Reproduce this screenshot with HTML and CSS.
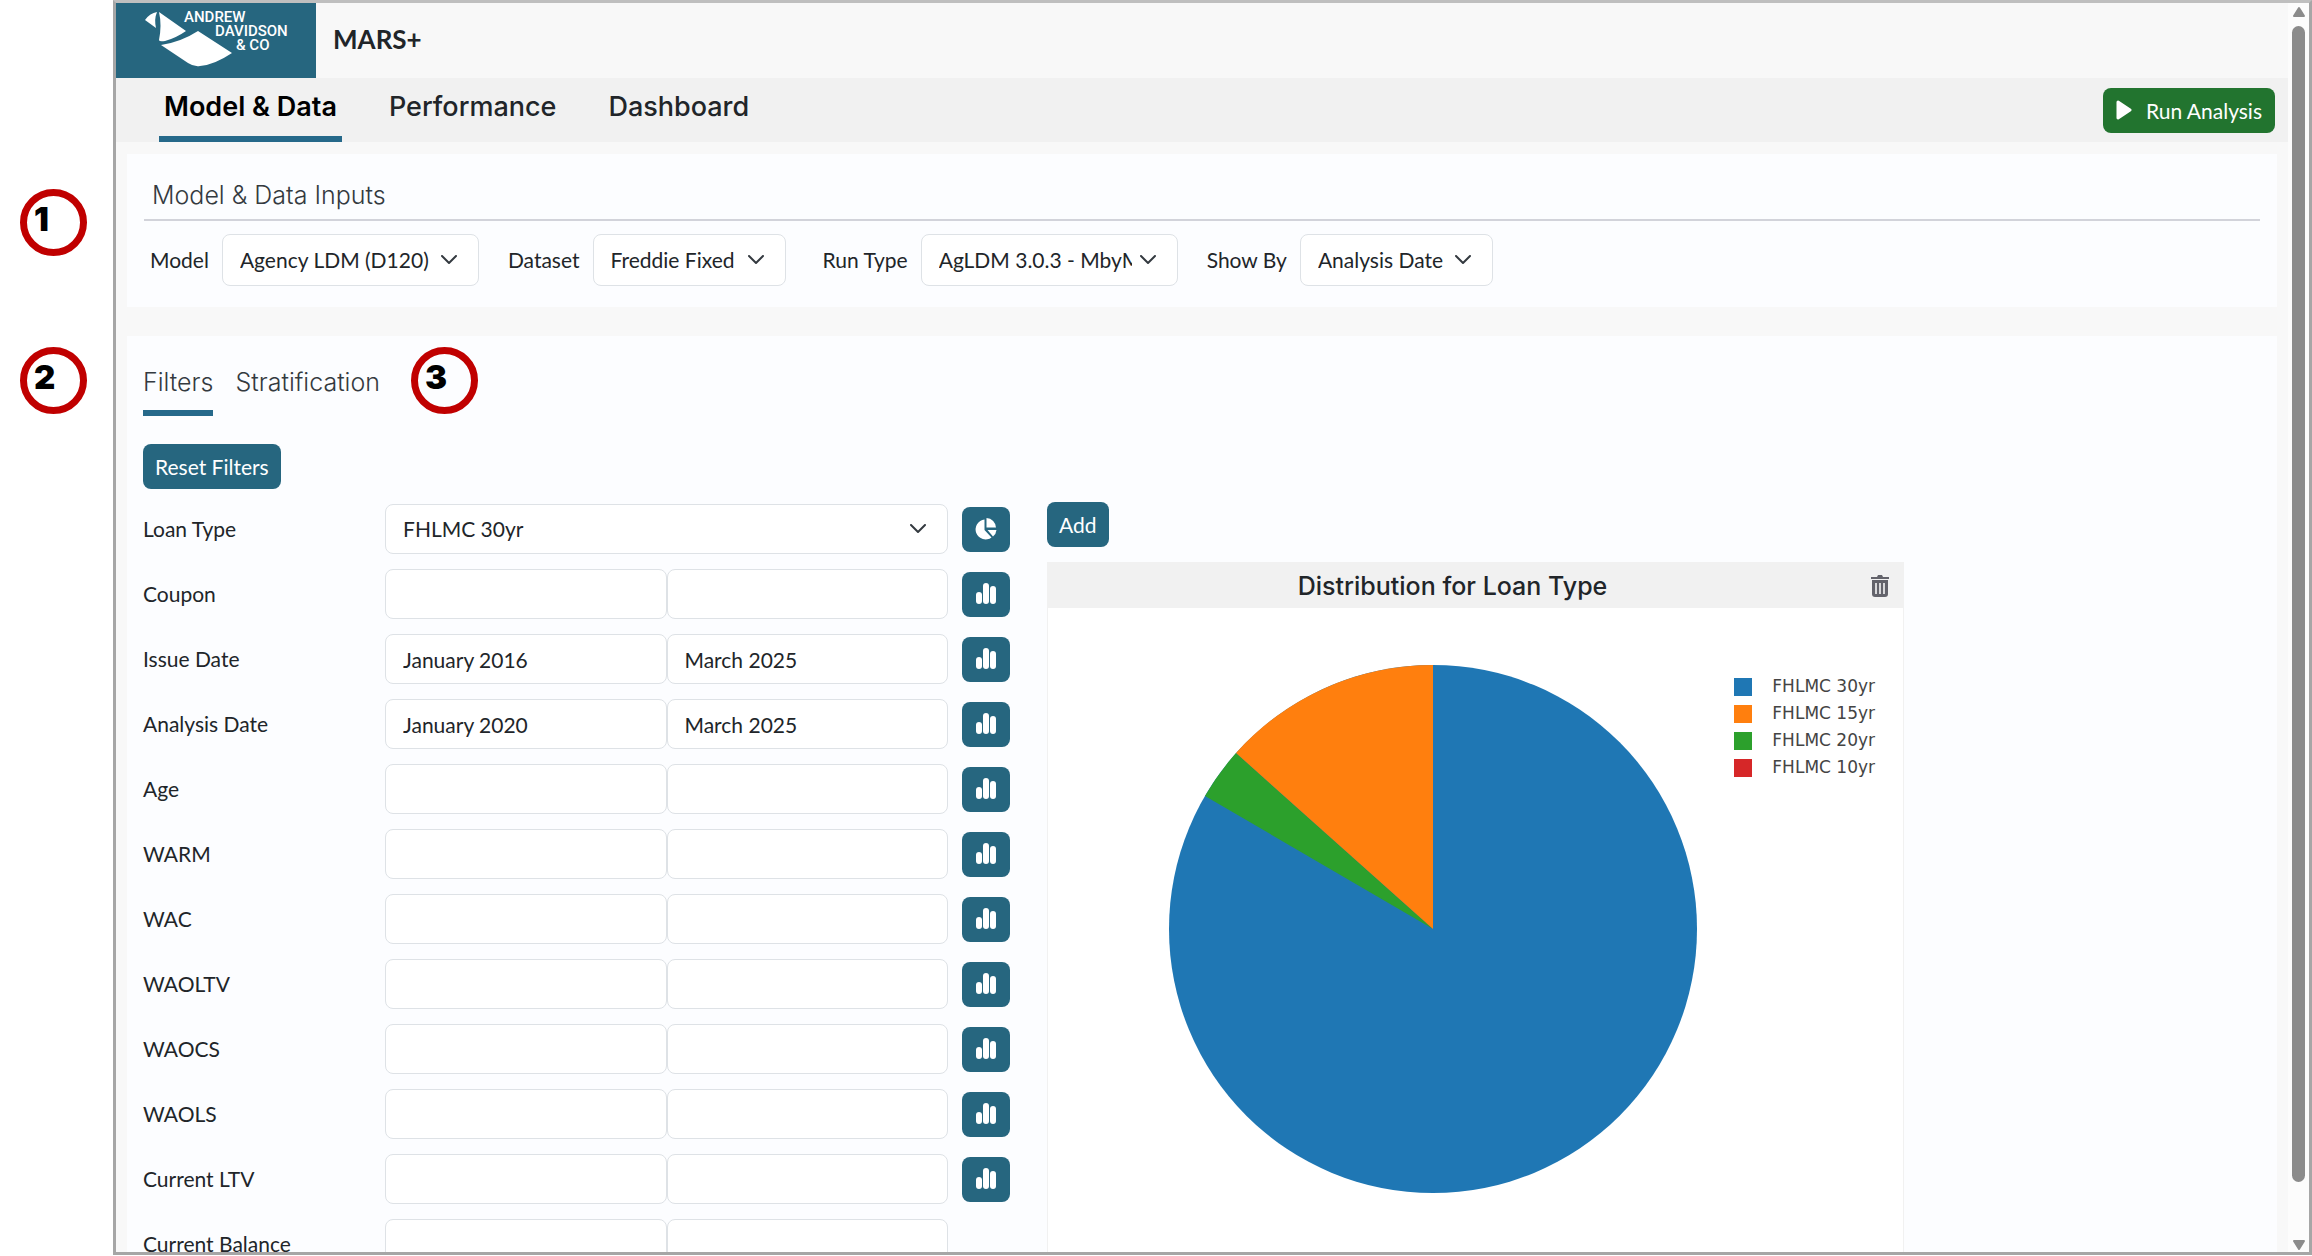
FILE: index.html
```html
<!DOCTYPE html>
<html lang="en">
<head>
  <meta charset="utf-8">
  <title>MARS+</title>
  <link rel="stylesheet" href="styles.css">
</head>
<body>
  <!-- Shared icons -->
  <svg class="sprite" aria-hidden="true">
    <symbol id="icon-bars" viewBox="0 0 20 22">
      <rect x="0" y="9" width="6" height="12" rx="3"/>
      <rect x="7" y="0" width="6" height="21" rx="3"/>
      <rect x="14" y="3" width="6" height="18" rx="3"/>
    </symbol>
    <symbol id="icon-pie" viewBox="0 0 22 22">
      <path d="M9.500 1.500 A10 10 0 1 0 16.500 19.500 L9.500 12 Z"/>
      <path d="M11.500 0 A9.800 9.800 0 0 1 21 9.600 L11.500 9.600 Z"/>
      <path d="M12.500 12 L21.500 12 A9.500 9.500 0 0 1 18 18.500 Z"/>
    </symbol>
  </svg>

  <div class="frame">
    <div class="page">
      <header class="header">
        <svg class="logo" viewBox="0 0 200 75" role="img" aria-label="Andrew Davidson &amp; Co">
          <path d="M29 17 Q34 10 41 9 Q38 16 40 25 Z"/>
          <path d="M43 9 L70 28 Q60 35 49 38 Q43 39 43 37 Q46 22 43 9 Z"/>
          <path d="M45 42 Q65 39 82 28 L116 50 Q98 62 84 63 Q78 64 72 60 Z"/>
          <text x="68" y="19">ANDREW</text>
          <text x="99" y="33">DAVIDSON</text>
          <text x="120" y="47">&amp; CO</text>
        </svg>
        <div class="app-name">MARS+</div>
      </header>

      <nav class="nav">
        <a href="#" class="nav-link active">Model &amp; Data</a>
        <a href="#" class="nav-link">Performance</a>
        <a href="#" class="nav-link">Dashboard</a>
        <button class="run-button">
          <svg width="16" height="20" viewBox="0 0 16 20"><path d="M2 2 L14 10 L2 18 Z" stroke="#fff" stroke-width="3" stroke-linejoin="round"/></svg>
          Run Analysis
        </button>
      </nav>

      <section class="panel inputs">
        <h2 class="panel-title">Model &amp; Data Inputs</h2>
        <div class="input-row">
          <div class="input-group">
            <label for="model">Model</label>
            <select id="model" class="wide"><option>Agency LDM (D120)</option></select>
          </div>
          <div class="input-group">
            <label for="dataset">Dataset</label>
            <select id="dataset"><option>Freddie Fixed</option></select>
          </div>
          <div class="input-group run-type">
            <label for="run-type">Run Type</label>
            <select id="run-type" class="wide"><option>AgLDM 3.0.3 - MbyM</option></select>
          </div>
          <div class="input-group">
            <label for="show-by">Show By</label>
            <select id="show-by"><option>Analysis Date</option></select>
          </div>
        </div>
      </section>

      <section class="panel main">
        <div class="tabs">
          <a href="#" class="tab active">Filters</a>
          <a href="#" class="tab">Stratification</a>
        </div>
        <button class="button">Reset Filters</button>

        <div class="columns">
          <div class="filters" id="filters">
            <div class="filter-row">
              <label for="loan-type">Loan Type</label>
              <select id="loan-type"><option>FHLMC 30yr</option></select>
              <button class="icon-button" aria-label="Loan Type chart"><svg width="22" height="22"><use href="#icon-pie"/></svg></button>
            </div>
            <!-- Range filters will be added here dynamically -->
          </div>

          <div class="charts">
            <button class="button">Add</button>
            <div class="card">
              <div class="card-header">
                <h3 class="card-title">Distribution for Loan Type</h3>
                <button class="trash" aria-label="Remove chart">
                  <svg width="18" height="22" viewBox="0 0 18 22">
                    <path d="M0 2 H6 L7 0 H11 L12 2 H18 V4 H0 Z"/>
                    <path d="M1 5 H17 V19 Q17 22 14 22 H4 Q1 22 1 19 Z"/>
                    <path d="M5 8 V19 M9 8 V19 M13 8 V19" stroke="#d8d8da" stroke-width="2"/>
                  </svg>
                </button>
              </div>
              <div class="card-body">
                <svg class="pie" viewBox="-264 -264 528 528">
                  <circle r="264" fill="#1f77b4"/>
                  <path d="M0 0 L-228 -133 A264 264 0 0 1 -197 -176 Z" fill="#2ca02c"/>
                  <path d="M0 0 L-197 -176 A264 264 0 0 1 0 -264 Z" fill="#ff7f0e"/>
                </svg>
                <ul class="legend">
                  <li><span class="swatch blue"></span>FHLMC 30yr</li>
                  <li><span class="swatch orange"></span>FHLMC 15yr</li>
                  <li><span class="swatch green"></span>FHLMC 20yr</li>
                  <li><span class="swatch red"></span>FHLMC 10yr</li>
                </ul>
              </div>
            </div>
          </div>
        </div>
      </section>
    </div>

    <div class="scrollbar">
      <svg width="14" height="12" viewBox="0 0 14 12"><path d="M7 2 L12 10 H2 Z"/></svg>
      <div class="thumb"></div>
      <svg width="14" height="12" viewBox="0 0 14 12"><path d="M7 10 L12 2 H2 Z"/></svg>
    </div>
  </div>

  <div class="callout one">1</div>
  <div class="callout two">2</div>
  <div class="callout three">3</div>

  <script>
    const ranges = [
      { label: 'Coupon' },
      { label: 'Issue Date', from: 'January 2016', to: 'March 2025' },
      { label: 'Analysis Date', from: 'January 2020', to: 'March 2025' },
      { label: 'Age' },
      { label: 'WARM' },
      { label: 'WAC' },
      { label: 'WAOLTV' },
      { label: 'WAOCS' },
      { label: 'WAOLS' },
      { label: 'Current LTV' },
      { label: 'Current Balance', noChart: true }
    ];

    const container = document.getElementById('filters');
    ranges.forEach((range, i) => {
      const row = document.createElement('div');
      row.className = 'filter-row';
      row.innerHTML = `
        <label for="from-${i}">${range.label}</label>
        <div class="range">
          <input type="text" id="from-${i}" value="${range.from || ''}">
          <input type="text" id="to-${i}" aria-label="${range.label} to" value="${range.to || ''}">
        </div>
        ${range.noChart ? '' : `<button class="icon-button" aria-label="${range.label} chart"><svg width="20" height="22"><use href="#icon-bars"/></svg></button>`}`;
      container.appendChild(row);
    });
  </script>
</body>
</html>
```

FILE: styles.css
```css
* {
  box-sizing: border-box;
}

body {
  margin: 0;
  height: 100vh;
  padding: 0 0 1px 113px;
  background-color: #ffffff;
  color: #212529;
  font-family: Lato, sans-serif;
  font-size: 21px;
  line-height: 26px;
  overflow: hidden;
  position: relative;
}

a {
  text-decoration: none;
  color: inherit;
}

button,
input,
select {
  font: inherit;
  color: inherit;
}

.sprite {
  position: absolute;
  width: 0;
  height: 0;
}

.frame {
  display: flex;
  height: 100%;
  border: 3px solid #a6a6a6;
  border-top-color: #bfbfbf;
  overflow: hidden;
}

.page {
  flex: 1;
  min-width: 0;
  background-color: #f8f8f8;
}

/* Header */
.header {
  display: flex;
  align-items: center;
  gap: 17px;
  height: 75px;
}

.logo {
  width: 200px;
  height: 75px;
  background-color: #26667f;
  fill: #ffffff;
  font-family: Roboto, sans-serif;
  font-size: 15px;
  font-weight: 500;
}

.app-name {
  padding-bottom: 3px;
  font-size: 26px;
  font-weight: 700;
}

.nav {
  display: flex;
  align-items: center;
  gap: 42px;
  height: 64px;
  padding: 0 13px 0 43px;
  background-color: #f1f1f1;
  font-family: Inter, sans-serif;
  font-size: 27px;
  font-weight: 500;
}

.nav-link {
  height: 64px;
  padding: 0 5px;
  line-height: 58px;
  border-bottom: 6px solid transparent;
}

.nav-link.active {
  color: #000000;
  font-weight: 600;
  border-color: #26698a;
}

.run-button {
  display: flex;
  align-items: center;
  gap: 14px;
  height: 45px;
  margin-left: auto;
  padding: 0 13px;
  font: 21px Lato, sans-serif;
  color: #ffffff;
  fill: #ffffff;
  background-color: #22742f;
  border: none;
  border-radius: 8px;
}

/* Panels */
.panel {
  margin: 12px 11px 0;
  background-color: #fcfdff;
}

.inputs {
  height: 153px;
  padding: 26px 17px 0;
}

.panel-title {
  margin: 0 0 13px;
  padding: 0 8px 9px;
  font-family: Inter, sans-serif;
  font-size: 25px;
  font-weight: 300;
  line-height: 30px;
  color: #343a40;
  border-bottom: 2px solid #d2d3da;
}

.input-row {
  display: flex;
  gap: 29px;
  padding-left: 6px;
}

.input-group {
  display: flex;
  align-items: center;
  gap: 13px;
}

.run-type {
  margin-left: 8px;
}

select,
input {
  height: 50px;
  padding: 0 17px;
  background-color: #ffffff;
  border: 1px solid #dee2e6;
  border-radius: 8px;
}

select {
  appearance: none;
  width: 193px;
  padding-right: 45px;
  background-image: url("data:image/svg+xml,%3Csvg xmlns='http://www.w3.org/2000/svg' width='16' height='10' viewBox='0 0 16 10' fill='none' stroke='%23343a40' stroke-width='2' stroke-linecap='round' stroke-linejoin='round'%3E%3Cpolyline points='1 1 8 8 15 1'/%3E%3C/svg%3E");
  background-repeat: no-repeat;
  background-position: right 21px center;
}

.input-row select {
  height: 52px;
}

.input-row .wide {
  width: 257px;
}

.main {
  margin-top: 29px;
  padding: 0 16px;
}

.tabs {
  display: flex;
  gap: 22px;
  margin-bottom: 28px;
  padding-top: 22px;
  font-family: Inter, sans-serif;
  font-size: 25px;
  font-weight: 300;
  color: #343a40;
}

.tab {
  height: 58px;
  line-height: 48px;
  border-bottom: 6px solid transparent;
}

.tab.active {
  border-color: #26698a;
}

.button {
  height: 45px;
  padding: 0 12px;
  color: #ffffff;
  background-color: #26667f;
  border: none;
  border-radius: 8px;
}

.columns {
  display: flex;
  gap: 37px;
  margin-top: 13px;
}

.filters {
  display: flex;
  flex-direction: column;
  gap: 15px;
  width: 867px;
  padding-top: 2px;
}

.filter-row {
  display: flex;
  align-items: center;
}

.filter-row label {
  width: 242px;
}

.filter-row select,
.range {
  width: 563px;
}

.range {
  display: flex;
}

.range input {
  flex: 1;
  min-width: 0;
}

.icon-button {
  display: flex;
  align-items: center;
  justify-content: center;
  width: 48px;
  height: 45px;
  margin-left: 14px;
  padding: 0;
  fill: #ffffff;
  background-color: #26667f;
  border: none;
  border-radius: 8px;
}

/* Chart */
.charts {
  width: 857px;
}

.card {
  margin-top: 15px;
  background-color: #ffffff;
  border: 1px solid #f1f1f1;
}

.card-header {
  display: flex;
  align-items: center;
  height: 45px;
  padding-right: 14px;
  background-color: #f1f1f1;
}

.card-title {
  flex: 1;
  margin: 0;
  padding-right: 14px;
  text-align: center;
  font-family: Inter, sans-serif;
  font-size: 25px;
  font-weight: 500;
}

.trash {
  display: flex;
  padding: 0;
  fill: #63636b;
  background: none;
  border: none;
}

.card-body {
  display: flex;
  align-items: flex-start;
  height: 680px;
  padding: 57px 28px 0 121px;
}

.pie {
  width: 528px;
  height: 528px;
}

.legend {
  margin: 8px 0 0 auto;
  padding: 0;
  list-style: none;
  font-family: "DejaVu Sans", sans-serif;
  font-size: 17px;
  line-height: 27px;
  color: #444444;
}

.legend li {
  display: flex;
  align-items: center;
  gap: 20px;
}

.swatch {
  width: 18px;
  height: 18px;
}

.blue {
  background-color: #1f77b4;
}

.orange {
  background-color: #ff7f0e;
}

.green {
  background-color: #2ca02c;
}

.red {
  background-color: #d62728;
}

/* Scrollbar */
.scrollbar {
  display: flex;
  flex-direction: column;
  align-items: center;
  width: 21px;
  padding: 3px 0 1px;
  background-color: #fcfcfc;
  fill: #8b8b8b;
  stroke: #8b8b8b;
  stroke-width: 2px;
  stroke-linejoin: round;
}

.thumb {
  flex: 1;
  width: 13px;
  margin: 8px 0 57px;
  background-color: #8b8b8b;
  border-radius: 7px;
}

/* Numbered callouts over the page */
.callout {
  position: absolute;
  width: 67px;
  height: 67px;
  padding-left: 7px;
  border: 7px solid #c00000;
  border-radius: 50%;
  font-family: Inter, sans-serif;
  font-size: 33px;
  font-weight: 900;
  line-height: 46px;
  color: #000000;
}

.one {
  left: 20px;
  top: 189px;
}

.two {
  left: 20px;
  top: 347px;
}

.three {
  left: 411px;
  top: 347px;
}
```
